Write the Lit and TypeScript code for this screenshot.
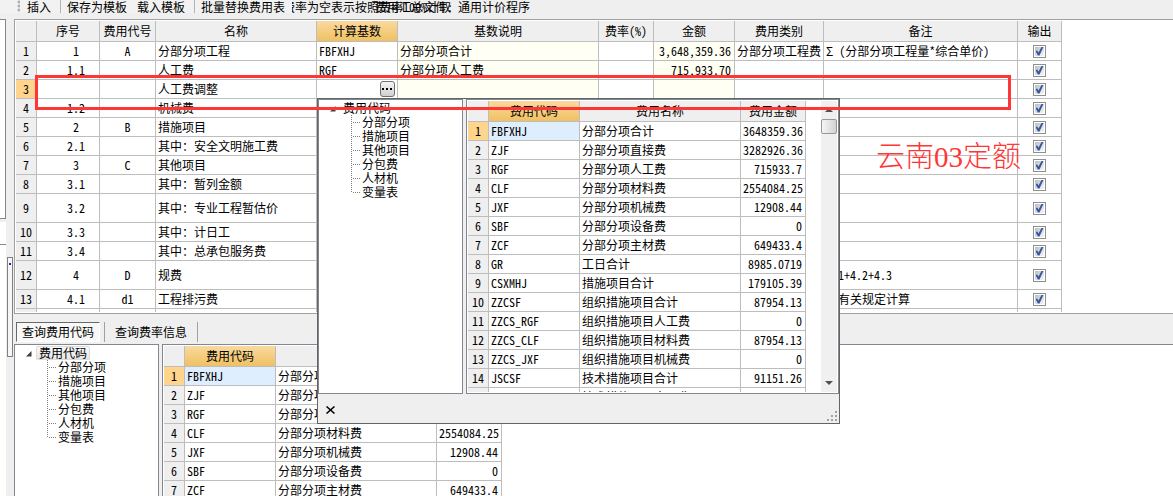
import { LitElement, html, css, svg, nothing } from "lit";
import { customElement, property } from "lit/decorators.js";

interface CostRow {
  seq: string;
  code: string;
  name: string;
  base?: string;
  desc?: string;
  amount?: string;
  kind?: string;
  note?: string;
  tall?: boolean;
}

const COST_ROWS: CostRow[] = [
  { seq: "1", code: "A", name: "分部分项工程", base: "FBFXHJ", desc: "分部分项合计", amount: "3,648,359.36", kind: "分部分项工程费", note: "Σ (分部分项工程量*综合单价)" },
  { seq: "1.1", code: "", name: "人工费", base: "RGF", desc: "分部分项人工费", amount: "715,933.70" },
  { seq: "", code: "", name: "人工费调整" },
  { seq: "1.2", code: "", name: "机械费" },
  { seq: "2", code: "B", name: "措施项目" },
  { seq: "2.1", code: "", name: "其中：安全文明施工费" },
  { seq: "3", code: "C", name: "其他项目" },
  { seq: "3.1", code: "", name: "其中：暂列金额" },
  { seq: "3.2", code: "", name: "其中：专业工程暂估价", tall: true },
  { seq: "3.3", code: "", name: "其中：计日工" },
  { seq: "3.4", code: "", name: "其中：总承包服务费" },
  { seq: "4", code: "D", name: "规费", note: "4.1+4.2+4.3", tall: true },
  { seq: "4.1", code: "d1", name: "工程排污费", note: "按有关规定计算" },
  { seq: "", code: "", name: "" },
];

const CODE_ROWS: [string, string, string][] = [
  ["FBFXHJ", "分部分项合计", "3648359.36"],
  ["ZJF", "分部分项直接费", "3282926.36"],
  ["RGF", "分部分项人工费", "715933.7"],
  ["CLF", "分部分项材料费", "2554084.25"],
  ["JXF", "分部分项机械费", "12908.44"],
  ["SBF", "分部分项设备费", "0"],
  ["ZCF", "分部分项主材费", "649433.4"],
  ["GR", "工日合计", "8985.0719"],
  ["CSXMHJ", "措施项目合计", "179105.39"],
  ["ZZCSF", "组织措施项目合计", "87954.13"],
  ["ZZCS_RGF", "组织措施项目人工费", "0"],
  ["ZZCS_CLF", "组织措施项目材料费", "87954.13"],
  ["ZZCS_JXF", "组织措施项目机械费", "0"],
  ["JSCSF", "技术措施项目合计", "91151.26"],
  ["JSCS_RGF", "技术措施项目人工费", "0"],
];

const TREE_ITEMS = ["分部分项", "措施项目", "其他项目", "分包费", "人材机", "变量表"];

const textStyles = css`
  :host {
    font-family: "Noto Sans CJK SC", "Liberation Sans", sans-serif;
    font-size: 12px;
    line-height: 14px;
    color: #000;
    font-feature-settings: "hwid";
  }
  * {
    box-sizing: border-box;
  }
`;

const gridStyles = css`
  table {
    table-layout: fixed;
    border-collapse: separate;
    border-spacing: 0;
    width: 0;
  }
  th,
  td {
    height: 19px;
    padding: 0 2px;
    border-right: 1px solid #bdbdbd;
    border-bottom: 1px solid #bdbdbd;
    background: #fff;
    font-weight: normal;
    text-align: left;
    white-space: nowrap;
  }
  thead th {
    height: 21px;
    padding: 0;
    background: #efefef;
    text-align: center;
  }
  thead .picked {
    background: linear-gradient(#f9d99f, #f0c162);
  }
  tbody th {
    padding: 0;
    background: #efefef;
    text-align: center;
  }
  tbody .current {
    background: #ffd58d;
  }
  .num {
    padding-right: 3px;
    text-align: right;
  }
`;

@customElement("code-tree")
export class CodeTree extends LitElement {
  @property({ type: Boolean }) focusedRoot = false;

  static styles = [
    textStyles,
    css`
      :host {
        display: block;
        flex: none;
        box-sizing: border-box;
        width: 145px;
        padding: 1px 0 0 10px;
        border: 1px solid #828790;
        background: #fff;
      }
      ul {
        margin: 0;
        padding: 0 0 0 22px;
        list-style: none;
      }
      .root {
        display: flex;
        align-items: center;
        gap: 4px;
        height: 14px;
      }
      .label {
        padding: 0 3px;
        border-radius: 2px;
      }
      .lit {
        background: linear-gradient(#fafafa, #e5e5e5);
        box-shadow: 0 0 0 1px #dcdcdc inset;
      }
      li {
        display: flex;
        gap: 1px;
        height: 14px;
        white-space: nowrap;
      }
      svg {
        display: block;
        flex: none;
      }
    `,
  ];

  render() {
    const last = TREE_ITEMS.length - 1;
    return html`
      <div class="root">
        <svg width="7" height="7" viewBox="0 0 7 7"><path d="M6.5 1v5.500h-5.500z" fill="#404040" /></svg>
        <span class="label ${this.focusedRoot ? "lit" : ""}">费用代码</span>
      </div>
      <ul>
        ${TREE_ITEMS.map(
          (t, i) => html`<li>
            <svg width="10" height="14" viewBox="0 0 10 14" stroke="#808080" stroke-dasharray="1 1">
              ${svg`<path d="M0.500 0V${i === last ? 8 : 14}M2 7.500H9" />`}
            </svg>
            <span>${t}</span>
          </li>`
        )}
      </ul>
    `;
  }
}

@customElement("code-grid")
export class CodeGrid extends LitElement {
  static styles = [
    textStyles,
    gridStyles,
    css`
      :host {
        display: block;
      }
      .c-row { width: 21px; }
      .c-code { width: 91px; }
      .c-name { width: 161px; }
      .c-sum { width: 65px; }
      .chosen {
        background: #dfeeff;
      }
    `,
  ];

  render() {
    return html`
      <table>
        <colgroup>
          <col class="c-row" /><col class="c-code" /><col class="c-name" /><col class="c-sum" />
        </colgroup>
        <thead>
          <tr>
            <th></th>
            <th class="picked">费用代码</th>
            <th>费用名称</th>
            <th>费用金额</th>
          </tr>
        </thead>
        <tbody>
          ${CODE_ROWS.map(
            ([code, name, sum], i) => html`<tr>
              <th class=${i === 0 ? "current" : ""}>${i + 1}</th>
              <td class=${i === 0 ? "chosen" : ""}>${code}</td>
              <td>${name}</td>
              <td class="num">${sum}</td>
            </tr>`
          )}
        </tbody>
      </table>
    `;
  }
}

@customElement("cost-grid")
export class CostGrid extends LitElement {
  static styles = [
    textStyles,
    gridStyles,
    css`
      :host {
        display: block;
      }
      .w21 { width: 21px; }
      .w63 { width: 63px; }
      .w56 { width: 56px; }
      .w161 { width: 161px; }
      .w81 { width: 81px; }
      .w201 { width: 201px; }
      .w55 { width: 55px; }
      .w89 { width: 89px; }
      .w194 { width: 194px; }
      .w44 { width: 44px; }
      .tall > * {
        height: 29px;
      }
      .seq {
        padding: 0 0 0 16px;
        text-align: center;
      }
      .mid {
        padding: 0;
        text-align: center;
      }
      .calc {
        background: #fffff4;
      }
      .editor {
        display: flex;
        align-items: center;
        height: 18px;
      }
      .editor input {
        flex: 1;
        min-width: 0;
        height: 16px;
        padding: 0;
        border: 0;
        outline: 0;
        background: none;
        font: inherit;
      }
      .editor button {
        display: grid;
        place-items: center;
        width: 15px;
        height: 16px;
        padding: 0;
        border: 1px solid #707070;
        border-radius: 3px;
        background: linear-gradient(#f4f4f4, #d0d0d0);
      }
      .tick {
        appearance: none;
        display: grid;
        place-items: center;
        width: 13px;
        height: 13px;
        margin: 0 auto;
        border: 1px solid #8e8f8f;
        background: linear-gradient(135deg, #b8bfc9, #f6f6f6) content-box #f4f4f4;
        padding: 1px;
      }
      .tick:checked::before {
        content: "";
        width: 8px;
        height: 9px;
        background: #3c5799;
        clip-path: polygon(0 50%, 22% 45%, 38% 66%, 78% 0, 100% 4%, 50% 100%, 30% 100%);
      }
    `,
  ];

  render() {
    const heads = ["序号", "费用代号", "名称", "计算基数", "基数说明", "费率(%)", "金额", "费用类别", "备注", "输出"];
    const widths = ["w21", "w63", "w56", "w161", "w81", "w201", "w55", "w81", "w89", "w194", "w44"];
    return html`
      <table>
        <colgroup>
          ${widths.map((w) => html`<col class=${w} />`)}
        </colgroup>
        <thead>
          <tr>
            <th></th>
            ${heads.map((h) => html`<th class=${h === "计算基数" ? "picked" : ""}>${h}</th>`)}
          </tr>
        </thead>
        <tbody>
          ${COST_ROWS.map(
            (r, i) => html`<tr class=${r.tall ? "tall" : ""}>
              <th class=${i === 2 ? "current" : ""}>${i + 1}</th>
              <td class="seq">${r.seq}</td>
              <td class="mid">${r.code}</td>
              <td>${r.name}</td>
              <td>${i === 2 ? this.editor() : r.base ?? nothing}</td>
              <td class="calc">${r.desc ?? nothing}</td>
              <td></td>
              <td class="num calc">${r.amount ?? nothing}</td>
              <td>${r.kind ?? nothing}</td>
              <td>${r.note ?? nothing}</td>
              <td><input class="tick" type="checkbox" aria-label="输出" checked /></td>
            </tr>`
          )}
        </tbody>
      </table>
    `;
  }

  private editor() {
    return html`<div class="editor">
      <input type="text" aria-label="计算基数" />
      <button type="button" aria-label="选择费用代码">
        <svg width="11" height="2" viewBox="0 0 11 2"><path d="M0 0h2v2h-2zM4 0h2v2h-2zM8 0h2v2h-2z" /></svg>
      </button>
    </div>`;
  }
}

@customElement("app-root")
export class AppRoot extends LitElement {
  static styles = [
    textStyles,
    css`
      :host {
        position: relative;
        display: flex;
        flex-direction: column;
        height: 100vh;
        overflow: hidden;
        background: #efefef;
      }
      button {
        font: inherit;
        font-feature-settings: inherit;
        color: inherit;
        white-space: nowrap;
      }
      .top {
        display: flex;
        flex: none;
        height: 19px;
        white-space: nowrap;
      }
      .tools {
        display: flex;
        flex: none;
        width: 292px;
        height: 13px;
        padding-left: 16px;
        background: #f2f2f2;
        z-index: 1;
      }
      .grip {
        width: 4px;
        height: 12px;
        margin-right: 7px;
        background: radial-gradient(circle at 3px 2px, #b0b0b0 1px, transparent 2px) 0 0 / 4px 4px;
      }
      .tools button {
        height: 13px;
        padding: 0;
        border: 0;
        background: none;
        line-height: 13px;
      }
      .sep {
        width: 1px;
        height: 13px;
        margin: 0 6px 0 9px;
        background: #b4b4b4;
      }
      .tools .next {
        margin-left: 10px;
      }
      .hints {
        display: grid;
        margin-left: -9px;
        line-height: 13px;
      }
      .hints > span {
        grid-area: 1 / 1;
      }
      .hints .over {
        padding-left: 92px;
      }
      .program {
        margin-left: 5px;
        line-height: 13px;
      }
      .work {
        display: flex;
        flex: 1;
        min-height: 0;
      }
      .side {
        display: flex;
        flex: none;
        width: 14px;
      }
      .stubs {
        display: flex;
        flex-direction: column;
        gap: 3px;
        width: 6px;
      }
      .stub {
        background: #fff;
        border-bottom: 1px solid #828790;
      }
      .first {
        height: 200px;
        border-top: 1px solid #828790;
        border-right: 1px solid #828790;
      }
      .second {
        height: 23px;
      }
      .third {
        flex: 1;
        margin-top: -3px;
        border: 0;
      }
      .handle {
        width: 6px;
        height: 100px;
        margin: 238px 0 0 1px;
        border: 1px solid #808080;
        background: radial-gradient(circle at 2px 6px, #2020c0 1px, transparent 1px) #f6f6f6;
      }
      .column {
        display: flex;
        flex: 1;
        flex-direction: column;
        min-width: 0;
      }
      .sheet {
        flex: none;
        height: 295px;
        padding: 1px;
        border: 1px solid #a0a0a0;
        border-right: 0;
        background: #fff;
      }
      .clip {
        height: 100%;
        overflow: hidden;
      }
      .tabs {
        display: flex;
        flex: none;
        align-items: center;
        height: 30px;
        padding: 5px 0 0 2px;
      }
      .tabs button {
        height: 20px;
        padding: 0 5px;
        border: 0;
        background: none;
        line-height: 18px;
      }
      .tabs .on {
        margin-right: 4px;
        border: 1px solid #fff;
        border-top-color: #696969;
        border-left-color: #696969;
        background: #f8f8f8;
      }
      .tabs .off {
        padding: 0 10px;
        border-left: 1px solid #a0a0a0;
        border-right: 1px solid #a0a0a0;
      }
      .pair {
        display: flex;
        flex: 1;
        gap: 3px;
        min-height: 0;
      }
      .box {
        flex: 1;
        min-width: 0;
        padding: 1px;
        border: 1px solid #828790;
        border-right: 0;
        background: #fff;
      }
      .column code-tree,
      .column .box {
        padding-bottom: 0;
        border-bottom: 0;
      }
      .popup {
        position: absolute;
        left: 317px;
        top: 98px;
        display: flex;
        flex-direction: column;
        width: 523px;
        height: 326px;
        border: 1px solid #646464;
        background: #efefef;
      }
      .popup .box {
        display: flex;
        justify-content: space-between;
        border-right: 1px solid #828790;
      }
      .bar {
        display: flex;
        flex: none;
        flex-direction: column;
        justify-content: space-between;
        width: 16px;
        background: #f0f0f0;
      }
      .bar svg {
        display: block;
        flex: none;
        margin: 6px auto;
      }
      .thumb {
        flex: none;
        height: 15px;
        margin: 1px 0 auto;
        border: 1px solid #979797;
        border-radius: 2px;
        background: linear-gradient(90deg, #f5f5f5, #d2d2d2);
      }
      .foot {
        display: flex;
        flex: none;
        align-items: center;
        justify-content: space-between;
        height: 29px;
        padding: 2px 1px 0 8px;
      }
      .foot button {
        display: grid;
        padding: 0;
        border: 0;
        background: none;
      }
      .foot .size {
        align-self: flex-end;
      }
      .frame {
        position: absolute;
        left: 35px;
        top: 75px;
        width: 976px;
        height: 35px;
        border: 3px solid #ff3636;
      }
      .remark {
        position: absolute;
        left: 876px;
        top: 139px;
        color: #ff3636;
        font-family: "Liberation Serif", "Noto Sans CJK SC", serif;
        font-size: 29px;
        font-weight: 300;
        line-height: 36px;
        white-space: nowrap;
      }
    `,
  ];

  render() {
    return html`
      <div class="top">
        <div class="tools">
          <span class="grip"></span>
          <button type="button">插入</button>
          <span class="sep"></span>
          <button type="button">保存为模板</button>
          <button type="button" class="next">载入模板</button>
          <span class="sep"></span>
          <button type="button">批量替换费用表</button>
        </div>
        <div class="hints">
          <span>费率为空表示按照费率100%计取</span>
          <span class="over">费用汇总文件:</span>
        </div>
        <span class="program">通用计价程序</span>
      </div>

      <div class="work">
        <div class="side">
          <div class="stubs">
            <div class="stub first"></div>
            <div class="stub second"></div>
            <div class="stub third"></div>
          </div>
          <div class="handle"></div>
        </div>
        <div class="column">
          <div class="sheet"><div class="clip"><cost-grid></cost-grid></div></div>
          <div class="tabs">
            <button type="button" class="on">查询费用代码</button>
            <button type="button" class="off">查询费率信息</button>
          </div>
          <div class="pair">
            <code-tree focusedRoot></code-tree>
            <div class="box"><div class="clip"><code-grid></code-grid></div></div>
          </div>
        </div>
      </div>

      <div class="popup">
        <div class="pair">
          <code-tree></code-tree>
          <div class="box">
            <div class="clip"><code-grid></code-grid></div>
            <div class="bar">
              <svg width="8" height="5" viewBox="0 0 8 5"><path d="M0 5L4 1L8 5z" fill="#505050" /></svg>
              <div class="thumb"></div>
              <svg width="8" height="5" viewBox="0 0 8 5"><path d="M0 0H8L4 4z" fill="#505050" /></svg>
            </div>
          </div>
        </div>
        <div class="foot">
          <button type="button" aria-label="关闭">
            <svg width="9" height="8" viewBox="0 0 9 8" fill="none" stroke="#000" stroke-width="1.500">
              <path d="M0.500 0.500L8.500 7.500M8.500 0.500L0.500 7.500" />
            </svg>
          </button>
          <svg class="size" width="12" height="13" viewBox="0 0 12 13" fill="#a0a0a0">
            <path d="M9 1h2v2h-2zM5 5h2v2h-2zM9 5h2v2h-2zM1 9h2v2h-2zM5 9h2v2h-2zM9 9h2v2h-2z" />
          </svg>
        </div>
      </div>

      <div class="frame"></div>
      <div class="remark">云南03定额</div>
    `;
  }
}
